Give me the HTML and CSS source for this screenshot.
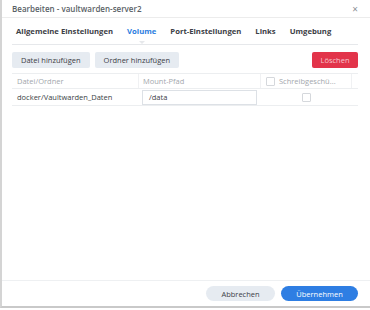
FILE: index.html
```html
<!DOCTYPE html>
<html lang="de">
<head>
  <meta charset="UTF-8" />
  <title>Bearbeiten - vaultwarden-server2</title>
  <link rel="stylesheet" href="styles.css">
</head>
<body>
  <div class="dialog">
    <div class="head">
      <span class="title">Bearbeiten - vaultwarden-server2</span>
      <span class="close">&#215;</span>
    </div>

    <div class="tabs">
      <span class="tab">Allgemeine Einstellungen</span>
      <span class="tab active">Volume</span>
      <span class="tab">Port-Einstellungen</span>
      <span class="tab">Links</span>
      <span class="tab">Umgebung</span>
    </div>

    <div class="content">
      <div class="toolbar">
        <button class="btn">Datei hinzufügen</button>
        <button class="btn">Ordner hinzufügen</button>
        <span class="spacer"></span>
        <button class="btn danger">Löschen</button>
      </div>

      <div class="grid">
        <div class="row header">
          <div class="cell c1">Datei/Ordner</div>
          <div class="cell c2">Mount-Pfad</div>
          <div class="cell c3"><span class="check"></span>Schreibgeschü...</div>
          <div class="cell c4"></div>
        </div>
        <div class="row">
          <div class="cell c1">docker/Vaultwarden_Daten</div>
          <div class="cell c2"><span class="input">/data</span></div>
          <div class="cell c3 center"><span class="check"></span></div>
          <div class="cell c4"></div>
        </div>
      </div>
    </div>

    <div class="foot">
      <button class="btn pill">Abbrechen</button>
      <button class="btn pill primary">Übernehmen</button>
    </div>
  </div>
</body>
</html>
```

FILE: styles.css
```css
body {
  margin: 0;
  background: #fff;
  font-family: "Open Sans", "Noto Sans", sans-serif;
  color: #3b3f45;
}

.dialog {
  height: 306px;
  border-left: 2px solid #d4d4d4;
  border-bottom: 2px solid #c9c9c9;
  display: flex;
  flex-direction: column;
  background: #fff;
}

.head {
  height: 17px;
  display: flex;
  align-items: center;
  justify-content: space-between;
  padding: 0 12px 0 10px;
  border-bottom: 1px solid #ececec;
}

.title {
  font-size: 8px;
  font-weight: 600;
  color: #5a5f66;
}

.close {
  font-size: 10px;
  color: #8a8f96;
}

.tabs {
  height: 26px;
  margin: 0 12px 0 10px;
  padding-left: 4px;
  display: flex;
  align-items: center;
  gap: 14px;
  border-bottom: 1px solid #e6e8eb;
}

.tab {
  font-size: 7.7px;
  font-weight: 700;
  color: #3c4046;
  position: relative;
}

.tab.active {
  color: #2b7de0;
}

.tab.active::after {
  content: "";
  position: absolute;
  left: 50%;
  bottom: -11px;
  margin-left: -3px;
  border: 3px solid transparent;
  border-top: 3px solid #e6e8eb;
}

.content {
  flex: 1;
  padding: 7px 12px 0 10px;
}

.toolbar {
  display: flex;
  gap: 5px;
}

.spacer {
  flex: 1;
}

.btn {
  font-family: inherit;
  font-size: 7.5px;
  height: 16px;
  padding: 0 9px;
  border: none;
  border-radius: 2px;
  background: #e6ebf1;
  color: #3c4046;
}

.btn.danger {
  background: #e2344a;
  color: #f7c5cc;
  padding: 0 7px;
  width: 46px;
}

.grid {
  margin-top: 5px;
}

.row {
  display: flex;
  height: 16px;
  border-bottom: 1px solid #eceef0;
  font-size: 7.5px;
}

.row.header {
  color: #a3a7ad;
  border-top: 1px solid #eceef0;
  height: 14px;
}

.cell {
  display: flex;
  align-items: center;
  padding-left: 5px;
  border-right: 1px solid #f0f1f3;
}

.c1 { width: 121px; }
.c2 { width: 117px; padding-left: 4px; }
.c3 { width: 85px; gap: 4px; }
.c4 { flex: 1; border-right: none; }

.row:not(.header) .cell {
  border-right: none;
}

.center {
  justify-content: center;
}

.check {
  width: 7px;
  height: 7px;
  border: 1px solid #d5d8dc;
  border-radius: 1px;
  background: #fff;
}

.input {
  width: 107px;
  height: 13px;
  border: 1px solid #dde1e6;
  padding-left: 6px;
  display: flex;
  align-items: center;
  color: #3c4046;
}

.foot {
  height: 25px;
  border-top: 1px solid #eef0f2;
  display: flex;
  align-items: center;
  justify-content: flex-end;
  gap: 6px;
  padding: 0 12px 0 0;
}

.btn.pill {
  height: 15px;
  border-radius: 8px;
  width: 69px;
}

.btn.primary {
  width: 77px;
  background: #2e7ee3;
  color: #fff;
}
```
